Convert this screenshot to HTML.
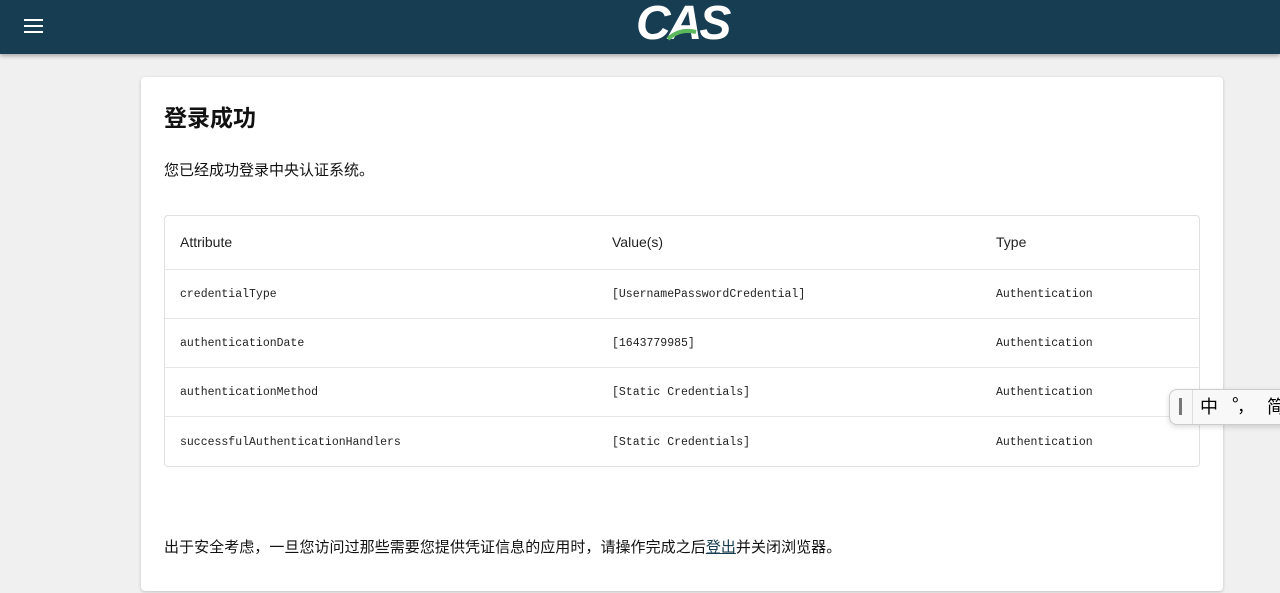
<!DOCTYPE html>
<html><head><meta charset="utf-8"><style>
body{margin:0;width:1280px;height:593px;background:#f0f0f0;font-family:"Liberation Sans","Noto Sans CJK SC",sans-serif;overflow:hidden;position:relative}
.hdr{position:absolute;left:0;top:0;width:1280px;height:54px;background:#163d52;box-shadow:0 2px 4px rgba(0,0,0,.3)}
.menu{position:absolute;left:24px;top:19px;width:19px}
.menu i{display:block;height:2px;background:#fff;margin-bottom:4px}
.logo{position:absolute;left:636px;top:-4px;color:#fff;font:italic bold 48px "Liberation Sans",sans-serif;letter-spacing:-3px}
.card{position:absolute;left:141px;top:77px;width:1082px;height:514px;background:#fff;border-radius:4px;box-shadow:0 1px 3px rgba(0,0,0,.2)}
h1{position:absolute;left:23px;top:22px;margin:0;font-size:23px;font-weight:bold;color:#111}
.p1{position:absolute;left:23px;top:82px;font-size:15px;color:#111}
.tbl{position:absolute;left:23px;top:138px;width:1034px;height:250px;border:1px solid #e0e0e0;border-radius:4px}
.row{position:absolute;left:0;width:1034px;border-top:1px solid #e6e6e6}
.c{position:absolute;top:0;white-space:nowrap}
.th .c{font-size:14px;color:#222}
.td .c{font:11.5px "Liberation Mono",monospace;color:#222}
.p2{position:absolute;left:23px;top:459px;font-size:15px;letter-spacing:.05px;color:#111}
.p2 a{color:#163d52;text-decoration:underline}
.ime{position:absolute;left:1169px;top:389px;width:120px;height:34px;background:#f8f8f8;border:1px solid #ccc;border-radius:8px;box-shadow:0 2px 6px rgba(0,0,0,.15);font-family:"Noto Sans CJK SC",sans-serif;font-size:18px}
</style></head><body>
<div class="hdr"><div class="menu"><i></i><i></i><i></i></div><div class="logo">CAS</div>
<svg style="position:absolute;left:666px;top:26px" width="34" height="16"><path d="M2 13 Q14 2 30 6" stroke="#5cb85c" stroke-width="4" fill="none"/></svg></div>
<div class="card">
<h1>登录成功</h1>
<div class="p1">您已经成功登录中央认证系统。</div>
<div class="tbl">
<div class="row th" style="top:0;height:53px;border-top:none"><span class="c" style="left:15px;top:18px">Attribute</span><span class="c" style="left:447px;top:18px">Value(s)</span><span class="c" style="left:831px;top:18px">Type</span></div>
<div class="row td" style="top:53px;height:49px"><span class="c" style="left:15px;top:18px">credentialType</span><span class="c" style="left:447px;top:18px">[UsernamePasswordCredential]</span><span class="c" style="left:831px;top:18px">Authentication</span></div>
<div class="row td" style="top:102px;height:49px"><span class="c" style="left:15px;top:18px">authenticationDate</span><span class="c" style="left:447px;top:18px">[1643779985]</span><span class="c" style="left:831px;top:18px">Authentication</span></div>
<div class="row td" style="top:151px;height:49px"><span class="c" style="left:15px;top:18px">authenticationMethod</span><span class="c" style="left:447px;top:18px">[Static Credentials]</span><span class="c" style="left:831px;top:18px">Authentication</span></div>
<div class="row td" style="top:200px;height:50px"><span class="c" style="left:15px;top:19px">successfulAuthenticationHandlers</span><span class="c" style="left:447px;top:19px">[Static Credentials]</span><span class="c" style="left:831px;top:19px">Authentication</span></div>
</div>
<div class="p2">出于安全考虑，一旦您访问过那些需要您提供凭证信息的应用时，请操作完成之后<a>登出</a>并关闭浏览器。</div>
</div>
<div class="ime"><span style="position:absolute;left:9px;top:8px;width:3px;height:17px;background:#777"></span><span style="position:absolute;left:22px;top:0;width:1px;height:34px;background:#ddd"></span><span style="position:absolute;left:30px;top:3px">中</span><span style="position:absolute;left:62px;top:1px">°,</span><span style="position:absolute;left:97px;top:3px">简</span></div>
</body></html>
